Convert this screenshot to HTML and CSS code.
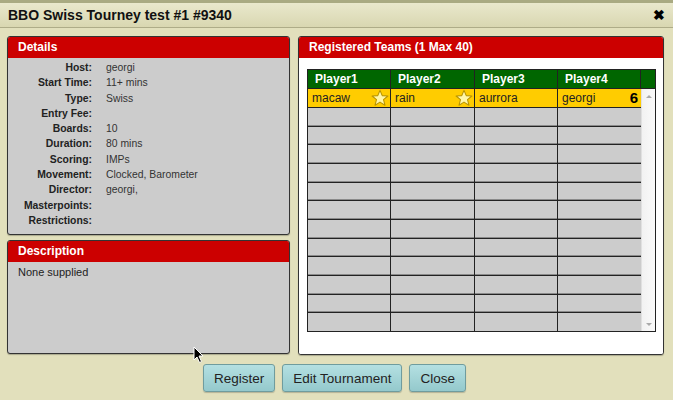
FILE: index.html
```html
<!DOCTYPE html>
<html>
<head>
<meta charset="utf-8">
<link rel="stylesheet" href="styles.css">
</head>
<body>
<div class="dialog">
  <div class="titlebar">
    <span class="title">BBO Swiss Tourney test #1 #9340</span>
    <span class="close-x">✖</span>
  </div>
  <div class="main">
    <div class="leftcol">
      <section class="panel details">
        <div class="phead">Details</div>
        <div class="pbody">
          <dl class="info">
            <dt>Host:</dt><dd>georgi</dd>
            <dt>Start Time:</dt><dd>11+ mins</dd>
            <dt>Type:</dt><dd>Swiss</dd>
            <dt>Entry Fee:</dt><dd></dd>
            <dt>Boards:</dt><dd>10</dd>
            <dt>Duration:</dt><dd>80 mins</dd>
            <dt>Scoring:</dt><dd>IMPs</dd>
            <dt>Movement:</dt><dd>Clocked, Barometer</dd>
            <dt>Director:</dt><dd>georgi,</dd>
            <dt>Masterpoints:</dt><dd></dd>
            <dt>Restrictions:</dt><dd></dd>
          </dl>
        </div>
      </section>
      <section class="panel desc">
        <div class="phead">Description</div>
        <div class="pbody desc-body">None supplied</div>
      </section>
    </div>
    <section class="panel teams">
      <div class="phead">Registered Teams (1 Max 40)</div>
      <div class="pbody teams-body">
        <div class="grid">
          <div class="gh">
            <div class="hc">Player1</div>
            <div class="hc">Player2</div>
            <div class="hc">Player3</div>
            <div class="hc">Player4</div>
            <div class="hc sb"></div>
          </div>
          <div class="gbody">
            <div class="rows">
              <div class="row sel">
                <div class="c">macaw<svg class="star" viewBox="0 0 20 20"><path d="M10 1.5 L12.5 7.4 L18.8 7.8 L13.9 11.8 L15.5 18 L10 14.6 L4.5 18 L6.1 11.8 L1.2 7.8 L7.5 7.4 Z" fill="#fff6a8" stroke="#b89400" stroke-width="1.2" stroke-linejoin="round"/></svg></div>
                <div class="c">rain<svg class="star" viewBox="0 0 20 20"><path d="M10 1.5 L12.5 7.4 L18.8 7.8 L13.9 11.8 L15.5 18 L10 14.6 L4.5 18 L6.1 11.8 L1.2 7.8 L7.5 7.4 Z" fill="#fff6a8" stroke="#b89400" stroke-width="1.2" stroke-linejoin="round"/></svg></div>
                <div class="c">aurrora</div>
                <div class="c">georgi<span class="num">6</span></div>
              </div>
              <div class="row"><div class="c"></div><div class="c"></div><div class="c"></div><div class="c"></div></div>
              <div class="row"><div class="c"></div><div class="c"></div><div class="c"></div><div class="c"></div></div>
              <div class="row"><div class="c"></div><div class="c"></div><div class="c"></div><div class="c"></div></div>
              <div class="row"><div class="c"></div><div class="c"></div><div class="c"></div><div class="c"></div></div>
              <div class="row"><div class="c"></div><div class="c"></div><div class="c"></div><div class="c"></div></div>
              <div class="row"><div class="c"></div><div class="c"></div><div class="c"></div><div class="c"></div></div>
              <div class="row"><div class="c"></div><div class="c"></div><div class="c"></div><div class="c"></div></div>
              <div class="row"><div class="c"></div><div class="c"></div><div class="c"></div><div class="c"></div></div>
              <div class="row"><div class="c"></div><div class="c"></div><div class="c"></div><div class="c"></div></div>
              <div class="row"><div class="c"></div><div class="c"></div><div class="c"></div><div class="c"></div></div>
              <div class="row"><div class="c"></div><div class="c"></div><div class="c"></div><div class="c"></div></div>
              <div class="row"><div class="c"></div><div class="c"></div><div class="c"></div><div class="c"></div></div>
            </div>
            <div class="scrollbar">
              <span class="arr up"></span>
              <span class="arr down"></span>
            </div>
          </div>
        </div>
      </div>
    </section>
  </div>
  <div class="buttons">
    <button class="btn">Register</button>
    <button class="btn">Edit Tournament</button>
    <button class="btn">Close</button>
  </div>
  <svg class="cursor" viewBox="0 0 12 18" width="12" height="18"><path d="M1 1 L1 14 L4 11 L6.5 16.5 L8.5 15.5 L6 10 L10 10 Z" fill="#000" stroke="#fff" stroke-width="1"/></svg>
</div>
</body>
</html>
```
FILE: styles.css
```css
* { box-sizing: border-box; }
html, body { margin: 0; padding: 0; }
body {
  width: 673px;
  height: 400px;
  overflow: hidden;
  background: #e2e0bc;
  font-family: "Liberation Sans", Arial, sans-serif;
  color: #222;
}
.dialog {
  position: relative;
  width: 673px;
  height: 400px;
  background: #e2e0bc;
}
.titlebar {
  height: 28px;
  border-top: 3px solid #a9aa82;
  border-bottom: 1px solid #aeac88;
  background: linear-gradient(#e9e8cc, #d9d7b1);
  display: flex;
  align-items: center;
  justify-content: space-between;
  padding: 0 8px 0 8px;
}
.title {
  font-weight: bold;
  font-size: 14px;
  color: #111;
}
.close-x {
  font-size: 14px;
  font-weight: bold;
  color: #000;
}
.main {
  display: flex;
  gap: 8px;
  padding: 8px 0 0 7px;
  height: 327px;
}
.leftcol {
  width: 283px;
  display: flex;
  flex-direction: column;
  gap: 5px;
}
.panel {
  border: 1px solid #333;
  border-radius: 3px;
  background: #cccccc;
  overflow: hidden;
  box-shadow: 0 1px 1px rgba(0,0,0,0.25);
  display: flex;
  flex-direction: column;
}
.phead {
  background: #cc0000;
  color: #fff;
  font-weight: bold;
  font-size: 12px;
  height: 21px;
  line-height: 21px;
  padding-left: 10px;
  flex: none;
}
.details { height: 199px; }
.desc { height: 114px; }
.pbody { flex: 1; }
.info {
  margin: 0;
  padding-top: 2px;
  display: grid;
  grid-template-columns: 84px 1fr;
  column-gap: 14px;
  font-size: 10.4px;
  line-height: 15.3px;
}
.info dt {
  font-weight: bold;
  text-align: right;
  color: #222;
}
.info dd {
  margin: 0;
  color: #333;
}
.desc-body {
  font-size: 11px;
  padding: 4px 0 0 10px;
  color: #222;
}
.teams {
  width: 366px;
  height: 319px;
  background: #fff;
}
.teams-body {
  background: #fff;
  padding: 11px 0 0 8px;
}
.grid {
  width: 349px;
  height: 263px;
  border: 1px solid #222;
  display: flex;
  flex-direction: column;
  background: #ccc;
}
.gh {
  display: flex;
  height: 19px;
  background: #006600;
  flex: none;
  border-bottom: 1px solid #222;
}
.hc {
  width: 83px;
  border-right: 1px solid #222;
  color: #fff;
  font-weight: bold;
  font-size: 12px;
  line-height: 18px;
  padding-left: 7px;
}
.hc:nth-child(2) { width: 84px; }
.hc.sb { width: 15px; border-right: none; flex: 1; }
.gbody {
  flex: 1;
  display: flex;
}
.rows {
  width: 333px;
  display: flex;
  flex-direction: column;
}
.row {
  flex: 1;
  display: flex;
  border-bottom: 1px solid #222;
  box-shadow: inset 0 -1px 0 #8a8a8a;
}
.row:last-child { border-bottom: none; box-shadow: none; }
.row.sel {
  background: #ffcc00;
  box-shadow: none;
  flex: none;
  height: 19px;
}
.c {
  width: 83px;
  border-right: 1px solid #222;
  font-size: 12px;
  line-height: 18px;
  padding-left: 4px;
  padding-right: 1px;
  display: flex;
  align-items: center;
  justify-content: space-between;
  color: #222;
}
.c:nth-child(2) { width: 84px; }
.c:last-child { border-right: none; width: 83px; }
.star { width: 18px; height: 18px; }
.num {
  font-weight: bold;
  font-size: 15px;
  color: #000;
  padding-right: 2px;
}
.scrollbar {
  flex: 1;
  background: linear-gradient(90deg, #f2f2f2, #fafafa);
  border-left: 1px solid #e0e0e0;
  display: flex;
  flex-direction: column;
  justify-content: space-between;
  align-items: center;
  padding: 6px 0 5px;
}
.arr {
  width: 0;
  height: 0;
  border-left: 3px solid transparent;
  border-right: 3px solid transparent;
}
.arr.up { border-bottom: 3px solid #aaa; }
.arr.down { border-top: 3px solid #aaa; }
.buttons {
  display: flex;
  justify-content: center;
  gap: 7px;
  padding: 9px 0 0 0;
  margin-left: -4px;
}
.btn {
  height: 28px;
  border: 1px solid #6f9c9e;
  border-radius: 3px;
  background: linear-gradient(#b4e0e2, #94c9cc);
  font-family: "Liberation Sans", Arial, sans-serif;
  font-size: 13.5px;
  color: #222;
  padding: 0 10px;
  box-shadow: 0 1px 1px rgba(0,0,0,0.2);
}
.cursor {
  position: absolute;
  left: 193px;
  top: 346px;
}
```
